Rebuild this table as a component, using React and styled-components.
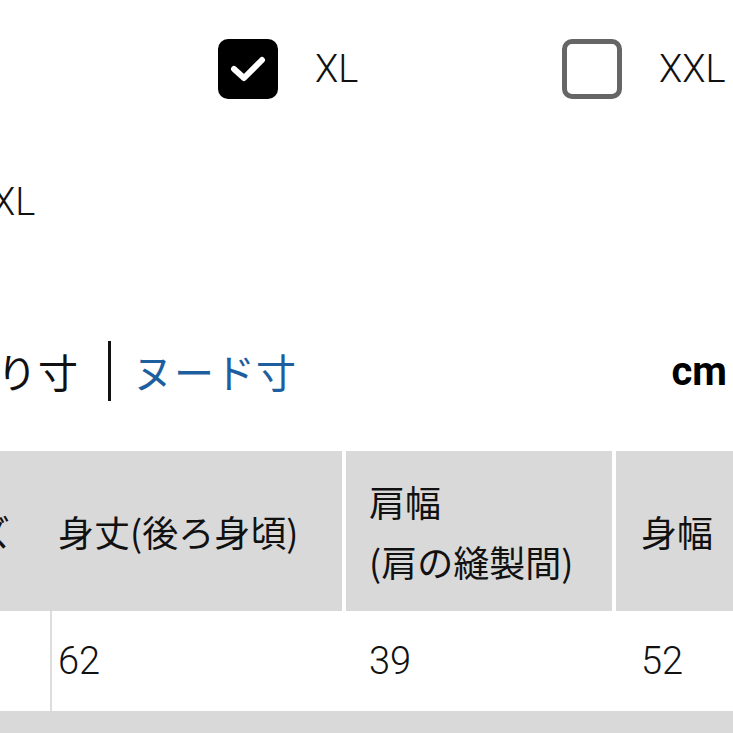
import React from 'react';
import styled, { createGlobalStyle } from 'styled-components';

const GlobalStyle = createGlobalStyle`
  html, body {
    margin: 0;
    padding: 0;
    background: #fff;
    overflow: hidden;
  }
  body {
    font-family: Roboto, "Noto Sans CJK JP", sans-serif;
    color: #111;
  }
`;

const Page = styled.div`
  margin-left: -126px;
  width: calc(100% + 126px);
  padding-top: 39px;
`;

const SizeGrid = styled.div`
  display: grid;
  grid-template-columns: repeat(3, 344px);
  grid-auto-rows: 60px;
  row-gap: 73px;
`;

const SizeOption = styled.label`
  display: flex;
  align-items: center;
  gap: 37px;
  font-size: 38px;
  font-weight: 300;
  color: #111;
`;

const Box = styled.span`
  box-sizing: border-box;
  width: 60px;
  height: 60px;
  flex: none;
  border-radius: 10px;
  display: flex;
  align-items: center;
  justify-content: center;
  background: ${(p) => (p.$checked ? '#000' : '#fff')};
  border: ${(p) => (p.$checked ? 'none' : '5px solid #666')};
`;

const TabBar = styled.div`
  display: flex;
  align-items: center;
  margin-top: 109px;
  height: 60px;
  padding-left: 0;
  padding-right: 6px;
`;

const Tab = styled.span`
  font-family: "Noto Sans CJK JP", sans-serif;
  font-size: 40px;
  letter-spacing: 1px;
  color: ${(p) => (p.$active ? '#1d5f9e' : '#111')};
`;

const Divider = styled.span`
  width: 3px;
  height: 60px;
  background: #111;
  margin: 0 22px 0 29px;
`;

const Unit = styled.span`
  margin-left: auto;
  font-size: 40px;
  font-weight: 700;
  color: #000;
`;

const Table = styled.div`
  margin-top: 50px;
  margin-left: 21px;
  display: grid;
  grid-template-columns: 157px 290px 270px 260px;
`;

const HeadCell = styled.div`
  background: #d9d9d9;
  height: 160px;
  display: flex;
  align-items: center;
  padding-left: ${(p) => p.$pad}px;
  border-left: ${(p) => (p.$sep ? '4px solid #fff' : 'none')};
  font-family: "Noto Sans CJK JP", sans-serif;
  font-size: 36px;
  line-height: 60px;
  color: #111;
  box-sizing: border-box;
`;

const BodyCell = styled.div`
  background: #fff;
  height: 100px;
  display: flex;
  align-items: center;
  padding-left: ${(p) => p.$pad}px;
  border-right: ${(p) => (p.$stick ? '2px solid #ddd' : 'none')};
  font-size: 38px;
  font-weight: 300;
  color: #111;
  box-sizing: border-box;
`;

const NextRow = styled.div`
  grid-column: 1 / -1;
  height: 60px;
  background: #d9d9d9;
`;

const Check = () => (
  <svg width="36" height="28" viewBox="0 0 36 28">
    <path d="M4 14 L14 23 L32 5" fill="none" stroke="#fff" strokeWidth="6" strokeLinecap="round" strokeLinejoin="round" />
  </svg>
);

const sizes = [
  { name: 'L', checked: false },
  { name: 'XL', checked: true },
  { name: 'XXL', checked: false },
  { name: '3XL', checked: false },
];

const App = () => (
  <>
    <GlobalStyle />
    <Page>
      <SizeGrid>
        {sizes.map((s) => (
          <SizeOption key={s.name}>
            <Box $checked={s.checked}>{s.checked && <Check />}</Box>
            {s.name}
          </SizeOption>
        ))}
      </SizeGrid>

      <TabBar>
        <Tab>仕上がり寸</Tab>
        <Divider />
        <Tab $active>ヌード寸</Tab>
        <Unit>cm</Unit>
      </TabBar>

      <Table>
        <HeadCell $pad={8}>サイズ</HeadCell>
        <HeadCell $pad={6}>身丈(後ろ身頃)</HeadCell>
        <HeadCell $pad={23} $sep>肩幅<br />(肩の縫製間)</HeadCell>
        <HeadCell $pad={25} $sep>身幅</HeadCell>
        <BodyCell $pad={8} $stick>XL</BodyCell>
        <BodyCell $pad={6}>62</BodyCell>
        <BodyCell $pad={27}>39</BodyCell>
        <BodyCell $pad={29}>52</BodyCell>
        <NextRow />
      </Table>
    </Page>
  </>
);

export default App;
